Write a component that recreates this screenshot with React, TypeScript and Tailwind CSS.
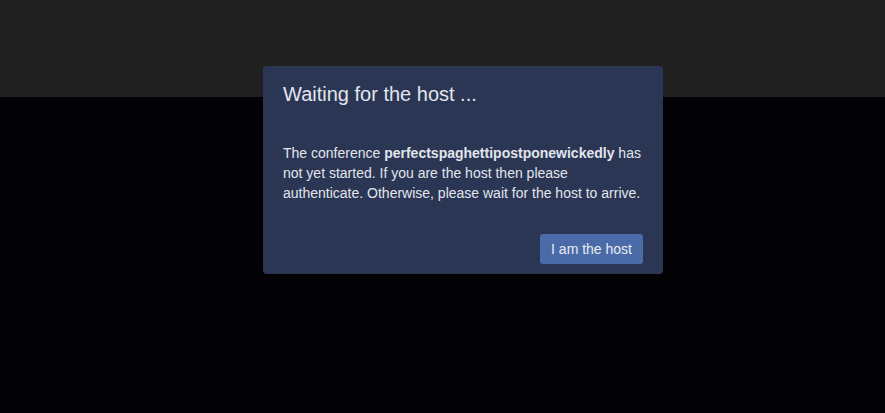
export default function App() {
  return (
    <div className="relative w-[885px] h-[413px] overflow-hidden bg-[#020103] font-['Liberation_Sans',Arial,sans-serif]">
      {/* top toolbar strip */}
      <div className="h-[97px] bg-[#202020]" />

      {/* dialog */}
      <div className="absolute left-[263px] top-[66px] w-[400px] h-[208px] rounded-[4px] bg-[#2a3654] text-[#e2e5ec] flex flex-col">
        <h1 className="px-5 pt-4 text-[20px] leading-[24px]">Waiting for the host ...</h1>
        <p className="pl-5 pr-4 mt-[37px] text-[14px] leading-[20px]">
          <span>The conference </span>
          <span className="font-bold">perfectspaghettipostponewickedly</span>
          <span> has not yet started. If you are the host then please authenticate. Otherwise, please wait for the host to arrive.</span>
        </p>
        <div className="flex justify-end px-5 mt-[31px]">
          <button className="h-[30px] px-[11px] rounded-[3px] bg-[#4a6ba8] text-[14px] text-[#e8ebf2]">
            I am the host
          </button>
        </div>
      </div>
    </div>
  );
}
